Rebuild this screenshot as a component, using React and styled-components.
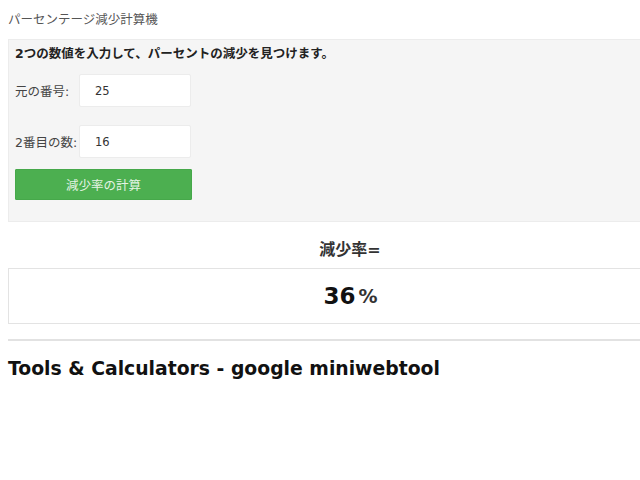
import React from "react";
import styled, { createGlobalStyle } from "styled-components";

const GlobalStyle = createGlobalStyle`
  body {
    margin: 8px 0 8px 8px;
    background: #fff;
    font-family: "DejaVu Sans", "Noto Sans CJK JP", sans-serif;
  }
`;

// the original page is wider than the window; its centre sits at x=350
const Page = styled.div`
  width: 632px;
`;

const Title = styled.div`
  font-size: 12.5px;
  color: #555;
  height: 24px;
  line-height: 24px;
`;

const Panel = styled.div`
  background: #f5f5f5;
  border: 1px solid #ececec;
  border-right: none;
  padding: 6px 6px 0 6px;
  height: 175px;
  box-sizing: content-box;
  margin-top: 7px;
`;

const Lead = styled.div`
  font-size: 12.5px;
  font-weight: bold;
  color: #222;
  line-height: 16px;
`;

const Row = styled.div`
  display: flex;
  align-items: center;
  gap: 6px;
  margin-top: ${(p) => p.$top}px;
`;

const Label = styled.label`
  font-size: 12.5px;
  color: #444;
  width: 58px;
  white-space: nowrap;
`;

const Input = styled.input`
  width: 112px;
  height: 33px;
  box-sizing: border-box;
  border: 1px solid #ececec;
  border-radius: 2px;
  background: #fff;
  padding: 0 15px;
  font-family: "DejaVu Sans", sans-serif;
  font-size: 11.5px;
  color: #333;
  outline: none;
`;

const Button = styled.button`
  display: block;
  margin-top: 11px;
  width: 177px;
  height: 31px;
  border: 1px solid #46a84a;
  border-radius: 1px;
  background: #4caf50;
  color: #e4f3e4;
  font-family: "DejaVu Sans", "Noto Sans CJK JP", sans-serif;
  font-size: 12.5px;
  cursor: pointer;
`;

const ResultLabel = styled.div`
  text-align: center;
  font-size: 16px;
  font-weight: bold;
  color: #333;
  margin-top: 18px;
  line-height: 20px;
  padding-left: 52px;
`;

const ResultBox = styled.div`
  margin-top: 8px;
  height: 54px;
  border: 1px solid #e3e3e3;
  border-right: none;
  display: flex;
  align-items: center;
  justify-content: center;
  padding-left: 52px;
  font-size: 23px;
  font-weight: bold;
  color: #111;
`;

const Percent = styled.span`
  font-weight: bold;
  font-size: 19px;
  color: #333;
  margin-left: 3px;
`;

const Rule = styled.hr`
  margin: 15px 0 0 0;
  border: none;
  border-top: 2px solid #e2e2e2;
`;

const Footer = styled.h2`
  margin: 17px 0 0 0;
  font-size: 18.8px;
  font-weight: bold;
  color: #111;
  font-family: "DejaVu Sans", sans-serif;
`;

export default function App() {
  return (
    <>
      <GlobalStyle />
      <Page>
        <Title>パーセンテージ減少計算機</Title>
        <Panel>
          <Lead>2つの数値を入力して、パーセントの減少を見つけます。</Lead>
          <Row $top={12}>
            <Label>元の番号:</Label>
            <Input defaultValue="25" />
          </Row>
          <Row $top={18}>
            <Label>2番目の数:</Label>
            <Input defaultValue="16" />
          </Row>
          <Button>減少率の計算</Button>
        </Panel>
        <ResultLabel>減少率=</ResultLabel>
        <ResultBox>
          36<Percent>%</Percent>
        </ResultBox>
        <Rule />
        <Footer>Tools &amp; Calculators - google miniwebtool</Footer>
      </Page>
    </>
  );
}
